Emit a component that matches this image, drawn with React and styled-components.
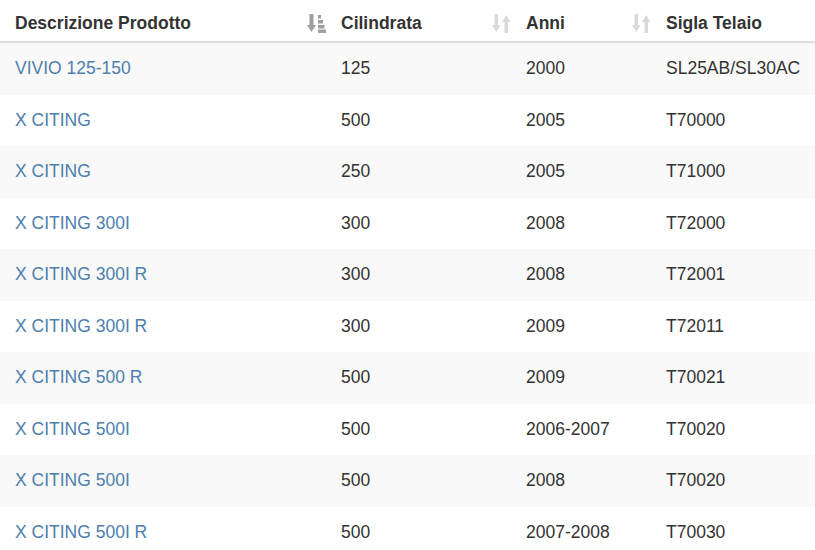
import React from "react";
import styled, { createGlobalStyle } from "styled-components";

const GlobalStyle = createGlobalStyle`
  html, body {
    margin: 0;
    padding: 0;
    background: #fff;
  }
  body {
    font-family: "Liberation Sans", Arial, sans-serif;
    font-size: 17.5px;
    color: #333;
    overflow: hidden;
  }
`;

const Table = styled.table`
  width: 100%;
  table-layout: fixed;
  border-collapse: collapse;
  border-spacing: 0;
`;

const HeadCell = styled.th`
  box-sizing: border-box;
  width: ${(p) => (p.$width ? `${p.$width}px` : "auto")};
  padding: 13px ${(p) => (p.$sortable ? "0" : "15px")} 7px 15px;
  line-height: 21px;
  text-align: left;
  font-weight: bold;
  color: #333;
  border-bottom: 2px solid #ddd;
  vertical-align: middle;
`;

const HeadInner = styled.div`
  display: flex;
  align-items: center;
  justify-content: space-between;
  white-space: nowrap;
`;

const Row = styled.tr`
  background: ${(p) => (p.$striped ? "#f9f9f9" : "#fff")};
`;

const Cell = styled.td`
  box-sizing: border-box;
  padding: 15px 15px 15px;
  line-height: 21.5px;
  white-space: nowrap;
  overflow: hidden;
  color: #333;
`;

const Link = styled.a`
  color: #4d80ae;
  text-decoration: none;
`;

const SortIcon = styled.svg`
  width: 19px;
  height: 19px;
  flex: none;
  display: block;
`;

function SortDesc() {
  return (
    <SortIcon viewBox="0 0 19 19">
      <g fill="#9f9f9f">
        <rect x="2.5" y="0" width="4" height="12" />
        <polygon points="0,11 9,11 4.5,18" />
        <rect x="11" y="1" width="3" height="3.5" />
        <rect x="11" y="6" width="5" height="3.5" />
        <rect x="11" y="11" width="6.5" height="3.5" />
        <rect x="11" y="15.5" width="8" height="3.5" />
      </g>
    </SortIcon>
  );
}

function SortBoth() {
  return (
    <SortIcon viewBox="0 0 19 19">
      <g fill="#dadada">
        <rect x="2.5" y="0" width="3.5" height="12" />
        <polygon points="0,11 8.5,11 4.25,18" />
        <rect x="12.5" y="7" width="3.5" height="12" />
        <polygon points="10,8 18.5,8 14.25,1" />
      </g>
    </SortIcon>
  );
}

const rows = [
  ["VIVIO 125-150", "125", "2000", "SL25AB/SL30AC"],
  ["X CITING", "500", "2005", "T70000"],
  ["X CITING", "250", "2005", "T71000"],
  ["X CITING 300I", "300", "2008", "T72000"],
  ["X CITING 300I R", "300", "2008", "T72001"],
  ["X CITING 300I R", "300", "2009", "T72011"],
  ["X CITING 500 R", "500", "2009", "T70021"],
  ["X CITING 500I", "500", "2006-2007", "T70020"],
  ["X CITING 500I", "500", "2008", "T70020"],
  ["X CITING 500I R", "500", "2007-2008", "T70030"],
];

export default function App() {
  return (
    <>
      <GlobalStyle />
      <Table>
        <thead>
          <tr>
            <HeadCell $width={326} $sortable>
              <HeadInner>
                Descrizione Prodotto
                <SortDesc />
              </HeadInner>
            </HeadCell>
            <HeadCell $width={185} $sortable>
              <HeadInner>
                Cilindrata
                <SortBoth />
              </HeadInner>
            </HeadCell>
            <HeadCell $width={140} $sortable>
              <HeadInner>
                Anni
                <SortBoth />
              </HeadInner>
            </HeadCell>
            <HeadCell>
              <HeadInner>Sigla Telaio</HeadInner>
            </HeadCell>
          </tr>
        </thead>
        <tbody>
          {rows.map((r, i) => (
            <Row key={i} $striped={i % 2 === 0}>
              <Cell>
                <Link href="#">{r[0]}</Link>
              </Cell>
              <Cell>{r[1]}</Cell>
              <Cell>{r[2]}</Cell>
              <Cell>{r[3]}</Cell>
            </Row>
          ))}
        </tbody>
      </Table>
    </>
  );
}
